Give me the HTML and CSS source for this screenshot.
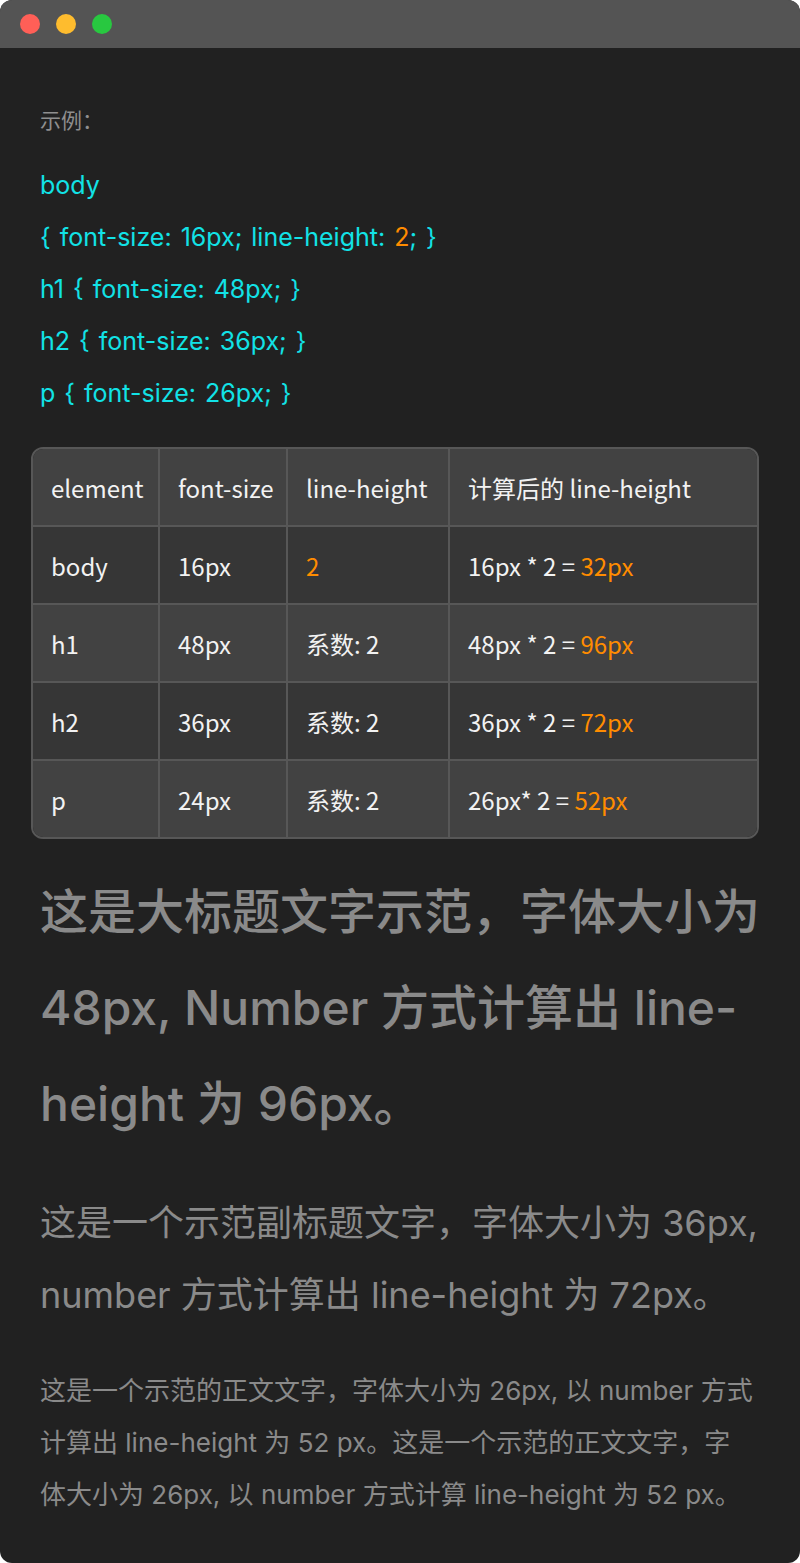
FILE: index.html
```html
<!DOCTYPE html>
<html lang="zh-CN">
<head>
<meta charset="utf-8">
<title>line-height 示例</title>
<link rel="stylesheet" href="styles.css">
</head>
<body>
<div class="window">
  <div class="titlebar">
    <span class="dot dot-red"></span>
    <span class="dot dot-yellow"></span>
    <span class="dot dot-green"></span>
  </div>
  <div class="content">
    <p class="label">示例：</p>
    <div class="code">
      <div class="code-line">body</div>
      <div class="code-line">{ font-size: 16px; line-height: <span class="num">2</span>; }</div>
      <div class="code-line">h1 { font-size: 48px; }</div>
      <div class="code-line">h2 { font-size: 36px; }</div>
      <div class="code-line">p { font-size: 26px; }</div>
    </div>
    <div class="table">
      <div class="row row-light">
        <div class="cell">element</div>
        <div class="cell">font-size</div>
        <div class="cell">line-height</div>
        <div class="cell">计算后的 line-height</div>
      </div>
      <div class="row row-dark">
        <div class="cell">body</div>
        <div class="cell">16px</div>
        <div class="cell"><span class="hl">2</span></div>
        <div class="cell">16px * 2 = <span class="hl">32px</span></div>
      </div>
      <div class="row row-light">
        <div class="cell">h1</div>
        <div class="cell">48px</div>
        <div class="cell">系数: 2</div>
        <div class="cell">48px * 2 = <span class="hl">96px</span></div>
      </div>
      <div class="row row-dark">
        <div class="cell">h2</div>
        <div class="cell">36px</div>
        <div class="cell">系数: 2</div>
        <div class="cell">36px * 2 = <span class="hl">72px</span></div>
      </div>
      <div class="row row-light row-last">
        <div class="cell">p</div>
        <div class="cell">24px</div>
        <div class="cell">系数: 2</div>
        <div class="cell">26px* 2 = <span class="hl">52px</span></div>
      </div>
    </div>
    <h1 class="demo-h1">这是大标题文字示范，字体大小为 48px, Number 方式计算出 line-height 为 96px。</h1>
    <h2 class="demo-h2">这是一个示范副标题文字，字体大小为 36px, number 方式计算出 line-height 为 72px。</h2>
    <p class="demo-p">这是一个示范的正文文字，字体大小为 26px, 以 number 方式计算出 line-height 为 52 px。这是一个示范的正文文字，字体大小为 26px, 以 number 方式计算 line-height 为 52 px。</p>
  </div>
</div>
</body>
</html>
```

FILE: styles.css
```css
html, body {
  margin: 0;
  padding: 0;
  background: #ffffff;
}

.window {
  width: 800px;
  height: 1563px;
  background: #212121;
  border-radius: 12px;
  overflow: hidden;
  font-family: "Inter", "Noto Sans CJK SC", sans-serif;
}

.titlebar {
  height: 48px;
  background: #545454;
  display: flex;
  align-items: center;
  gap: 16px;
  padding-left: 20px;
  box-sizing: border-box;
}

.dot {
  width: 20px;
  height: 20px;
  border-radius: 50%;
  display: block;
}
.dot-red { background: #ff5f57; }
.dot-yellow { background: #febc2e; }
.dot-green { background: #28c840; }

.content {
  padding: 57px 40px 0 40px;
}

.label {
  margin: 0;
  font-size: 21px;
  line-height: 32px;
  color: #8f8f8f;
}

.code {
  margin-top: 22px;
  color: #12e2e6;
  font-size: 25px;
  word-spacing: 2px;
}
.code-line {
  line-height: 52px;
}
.num { color: #ff8c00; }

.table {
  margin: 28px 1px 0 -9px;
  border: 2px solid #575757;
  border-radius: 12px;
  overflow: hidden;
  font-family: "Noto Sans CJK SC", sans-serif;
  font-size: 24px;
  color: #f2f2f2;
}
.row {
  display: grid;
  grid-template-columns: 127px 128px 162px 1fr;
  height: 78px;
  box-sizing: border-box;
  border-bottom: 2px solid #575757;
}
.row-last {
  border-bottom: none;
  height: 76px;
}
.row-light { background: #424242; }
.row-dark { background: #363636; }
.cell {
  display: flex;
  align-items: center;
  padding-left: 18px;
  border-right: 2px solid #575757;
  white-space: pre;
}
.cell:last-child { border-right: none; }
.hl { color: #ff8c00; }

.demo-h1 {
  margin: 25px 0 0 0;
  font-size: 48px;
  line-height: 96px;
  font-weight: 500;
  color: #8a8a8a;
}
.demo-h2 {
  margin: 35px 0 0 0;
  font-size: 36px;
  line-height: 72px;
  font-weight: 400;
  color: #8a8a8a;
}
.demo-p {
  margin: 34px 6px 0 0;
  font-size: 26px;
  line-height: 52px;
  color: #8a8a8a;
}
```
